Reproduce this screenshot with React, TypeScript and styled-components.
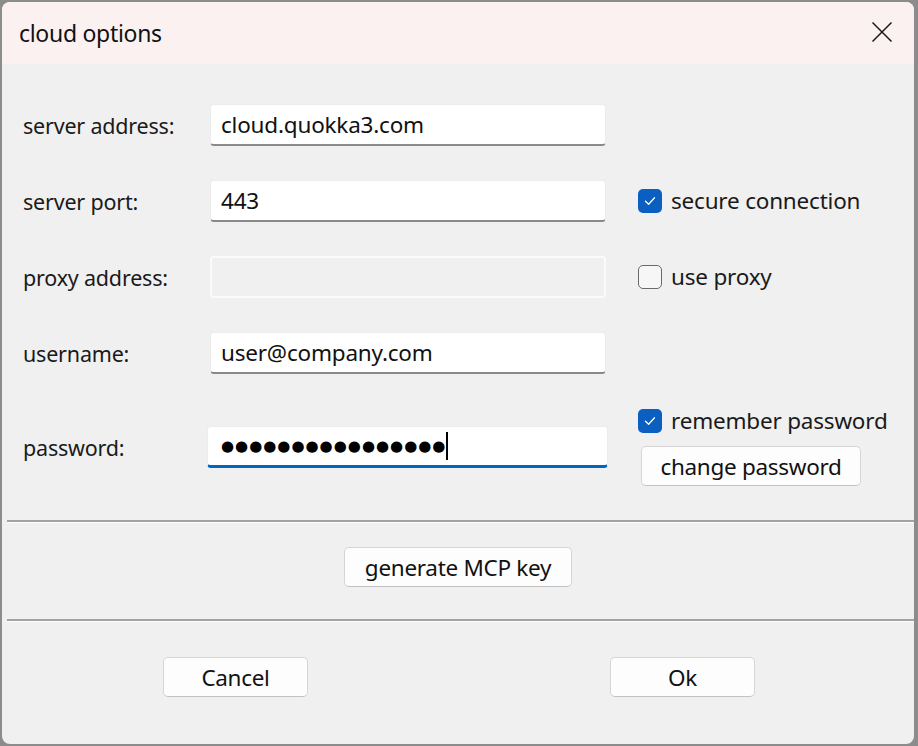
import styled, { createGlobalStyle } from "styled-components";

const GlobalStyle = createGlobalStyle`
  html, body {
    margin: 0;
    padding: 0;
    background: #8c8c8c;
  }
  body {
    font-family: "Noto Sans", "Open Sans", sans-serif;
    color: #1a1a1a;
  }
`;

const Window = styled.div`
  margin: 2px 4px 0 2px;
  width: 912px;
  height: 742px;
  background: #f0f0f0;
  border-radius: 8px;
  overflow: hidden;
  display: flex;
  flex-direction: column;
`;

const TitleBar = styled.div`
  height: 62px;
  flex: none;
  display: flex;
  align-items: center;
  justify-content: space-between;
  padding: 0 20px 0 17px;
  background: #fbf1f1;
`;

const Title = styled.span`
  font-size: 23px;
  color: #111;
  letter-spacing: -0.3px;
`;

const CloseButton = styled.button`
  border: none;
  background: transparent;
  padding: 0;
  width: 24px;
  height: 24px;
  display: flex;
  align-items: center;
  justify-content: center;
  margin-top: -2px;
`;

const Body = styled.div`
  padding-top: 40px;
  display: flex;
  flex-direction: column;
`;

const Form = styled.div`
  display: grid;
  grid-template-columns: 155px 396px 1fr;
  column-gap: 32px;
  row-gap: 34px;
  align-items: center;
  padding: 0 0 34px 21px;
`;

const Label = styled.label`
  font-size: 21.5px;
  letter-spacing: -0.2px;
  color: #1a1a1a;
`;

const TextBox = styled.div<{ $focused?: boolean; $disabled?: boolean }>`
  height: 42px;
  box-sizing: border-box;
  display: flex;
  align-items: center;
  padding: 0 10px;
  font-size: 22.5px;
  letter-spacing: -0.2px;
  color: #111;
  border-radius: 4px;
  background: ${(p) => (p.$disabled ? "#f0f0f0" : "#ffffff")};
  border: ${(p) => (p.$disabled ? "2px solid #fbfbfb" : "1px solid #ececec")};
  border-bottom: ${(p) =>
    p.$focused
      ? "3px solid #0067c0"
      : p.$disabled
        ? "2px solid #fbfbfb"
        : "2px solid #8a8a8a"};
  ${(p) => (p.$focused ? "margin: 0 -2px 0 -3px; padding-left: 13px;" : "")}
`;

const Dots = styled.span`
  font-family: "DejaVu Sans", sans-serif;
  font-size: 15px;
  letter-spacing: 1px;
  color: #000;
`;

const Caret = styled.span`
  display: inline-block;
  width: 2px;
  height: 28px;
  background: #000;
`;

const Check = styled.label`
  display: flex;
  align-items: center;
  gap: 9px;
  font-size: 22.5px;
  line-height: 26px;
  letter-spacing: -0.2px;
  color: #1a1a1a;
`;

const Box = styled.span<{ $checked?: boolean }>`
  width: 24px;
  height: 24px;
  box-sizing: border-box;
  border-radius: 5px;
  flex: none;
  display: flex;
  align-items: center;
  justify-content: center;
  background: ${(p) => (p.$checked ? "#0a5fc0" : "#f6f6f6")};
  border: ${(p) => (p.$checked ? "none" : "1.5px solid #6a6a6a")};
`;

const PasswordSide = styled.div`
  display: flex;
  flex-direction: column;
  align-items: flex-start;
  gap: 12px;
`;

const Button = styled.button<{ $width: number }>`
  width: ${(p) => p.$width}px;
  height: 40px;
  box-sizing: border-box;
  background: #fdfdfd;
  border: 1px solid #d6d6d6;
  border-bottom-color: #c2c2c2;
  border-radius: 5px;
  font-family: "Noto Sans", sans-serif;
  font-size: 22.5px;
  letter-spacing: -0.3px;
  color: #111;
  padding: 0;
`;

const ChangeButton = styled(Button)`
  margin-left: 3px;
`;

const Separator = styled.hr`
  margin: 0 0 0 5px;
  border: none;
  height: 2px;
  background: #a2a2a2;
  border-bottom: 1px solid #fdfdfd;
`;

const CenterRow = styled.div`
  display: flex;
  justify-content: center;
  padding: 24px 0 32px;
`;

const FooterRow = styled.div`
  display: flex;
  justify-content: space-between;
  padding: 35px 159px 0 161px;
`;

const CheckMark = () => (
  <svg width="14" height="14" viewBox="0 0 14 14">
    <path
      d="M2.5 7.3 L5.6 10.2 L11.5 3.8"
      fill="none"
      stroke="#ffffff"
      strokeWidth="1.3"
      strokeLinecap="round"
      strokeLinejoin="round"
    />
  </svg>
);

export default function App() {
  return (
    <>
      <GlobalStyle />
      <Window>
        <TitleBar>
          <Title>cloud options</Title>
          <CloseButton aria-label="close">
            <svg width="22" height="22" viewBox="0 0 22 22">
              <path
                d="M1.5 1.5 L20.5 20.5 M20.5 1.5 L1.5 20.5"
                stroke="#1a1a1a"
                strokeWidth="1.5"
                fill="none"
              />
            </svg>
          </CloseButton>
        </TitleBar>
        <Body>
          <Form>
            <Label>server address:</Label>
            <TextBox>cloud.quokka3.com</TextBox>
            <span />

            <Label>server port:</Label>
            <TextBox>443</TextBox>
            <Check>
              <Box $checked>
                <CheckMark />
              </Box>
              secure connection
            </Check>

            <Label>proxy address:</Label>
            <TextBox $disabled />
            <Check>
              <Box />
              use proxy
            </Check>

            <Label>username:</Label>
            <TextBox>user@company.com</TextBox>
            <span />

            <Label>password:</Label>
            <TextBox $focused>
              <Dots>{"●".repeat(16)}</Dots>
              <Caret />
            </TextBox>
            <PasswordSide>
              <Check>
                <Box $checked>
                  <CheckMark />
                </Box>
                remember password
              </Check>
              <ChangeButton $width={220}>change password</ChangeButton>
            </PasswordSide>
          </Form>
          <Separator />
          <CenterRow>
            <Button $width={228}>generate MCP key</Button>
          </CenterRow>
          <Separator />
          <FooterRow>
            <Button $width={145}>Cancel</Button>
            <Button $width={145}>Ok</Button>
          </FooterRow>
        </Body>
      </Window>
    </>
  );
}
